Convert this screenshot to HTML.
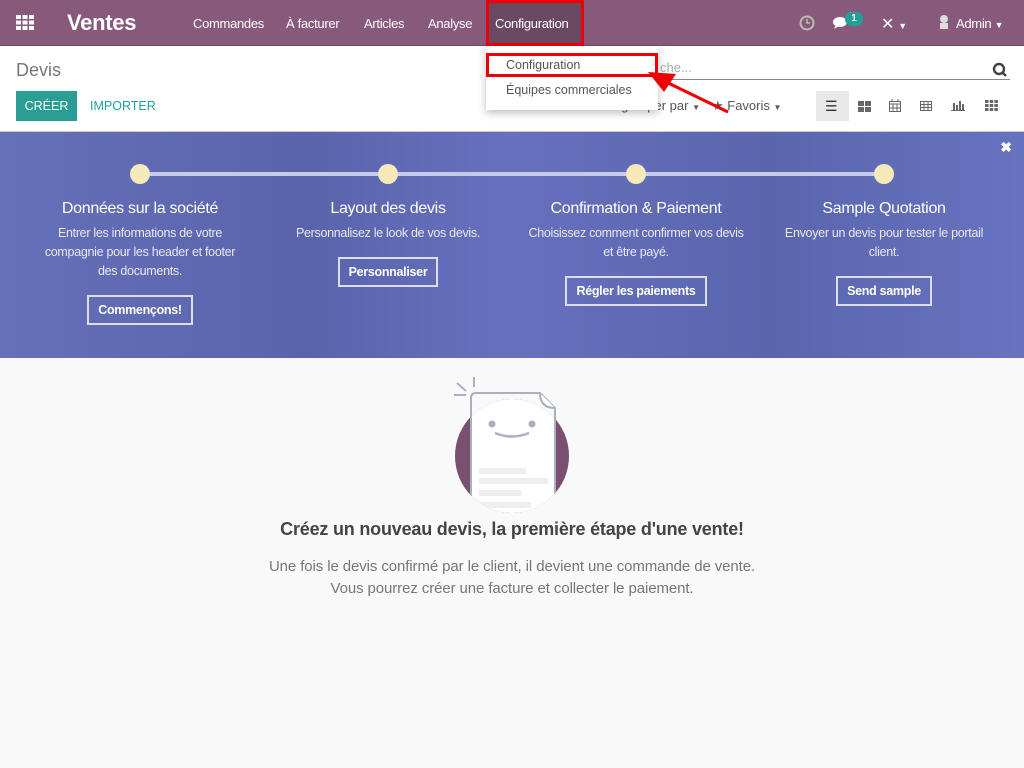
<!DOCTYPE html>
<html><head><meta charset="utf-8"><style>
*{box-sizing:border-box;margin:0;padding:0}
body{width:1024px;height:768px;overflow:hidden;font-family:"Liberation Sans",sans-serif;background:#f9f9f9;position:relative;color:#4c4c4c}
.nav{position:absolute;left:0;top:0;width:1024px;height:46px;background:#875a7b;border-bottom:1px solid #6c4a63}
.nav span{position:absolute;color:#fff;font-size:13px;top:16px;letter-spacing:-.3px}
.cp{position:absolute;left:0;top:46px;width:1024px;height:86px;background:#fff;border-bottom:1px solid #ccc}
.banner{position:absolute;left:0;top:132px;width:1024px;height:226px;background:linear-gradient(90deg,#6470b8 0%,#5a64ad 30%,#6670bd 50%,#5a65ae 75%,#6873c0 100%);color:#fff;text-align:center}
.col{position:absolute;top:68px;width:200px;margin-left:-100px}
.col h3{font-weight:normal;font-size:16px;margin-bottom:6px;letter-spacing:-.3px;white-space:nowrap}
.col p{font-size:12.5px;line-height:19px;color:#e8e8f4;letter-spacing:-.3px}
.col b{display:inline-block;border:2px solid #dde;padding:6px 9px;font-size:12.5px;margin-top:14px;letter-spacing:-.3px}
.dot{position:absolute;top:32px;width:20px;height:20px;border-radius:50%;background:#f6e9b8;margin-left:-10px}
.btn{position:absolute;font-size:13px}
</style></head><body>
<div class="nav">
 <svg style="position:absolute;left:16px;top:15px" width="18" height="15"><g fill="#fff"><rect x="0" y="0" width="5" height="4"/><rect x="6.5" y="0" width="5" height="4"/><rect x="13" y="0" width="5" height="4"/><rect x="0" y="5.5" width="5" height="4"/><rect x="6.5" y="5.5" width="5" height="4"/><rect x="13" y="5.5" width="5" height="4"/><rect x="0" y="11" width="5" height="4"/><rect x="6.5" y="11" width="5" height="4"/><rect x="13" y="11" width="5" height="4"/></g></svg>
 <span style="left:67px;top:10px;font-size:22px;font-weight:bold">Ventes</span>
 <span style="left:193px">Commandes</span><span style="left:286px">À facturer</span><span style="left:364px">Articles</span><span style="left:428px">Analyse</span>
 <div style="position:absolute;left:486px;top:0;width:98px;height:46px;background:#6a4a62;border:3px solid #e00"></div>
 <span style="left:495px">Configuration</span>
 <svg style="position:absolute;left:799px;top:15px" width="16" height="16"><circle cx="8" cy="8" r="6.5" fill="none" stroke="#bba" stroke-width="2"/><path d="M8 4v4h3" stroke="#bba" stroke-width="1.6" fill="none"/></svg>
 <svg style="position:absolute;left:832px;top:15px" width="18" height="16"><ellipse cx="8" cy="7" rx="7" ry="5" fill="#fff"/><path d="M4 10l-2 4 5-3z" fill="#fff"/></svg>
 <div style="position:absolute;left:845px;top:12px;width:18px;height:14px;border-radius:7px;background:#21a09a;color:#fff;font-size:10px;font-weight:bold;text-align:center;line-height:14px">1</div>
 <span style="left:881px;top:14px;font-size:16px">✕ <small style="font-size:9px">▼</small></span>
 <svg style="position:absolute;left:938px;top:14px" width="12" height="18"><circle cx="6" cy="5" r="4" fill="#ddd"/><path d="M2 9h8v6H2z" fill="#ddd"/></svg>
 <span style="left:956px">Admin <small style="font-size:9px">▼</small></span>
</div>
<div class="cp">
 <div style="position:absolute;left:16px;top:14px;font-size:18px;color:#777">Devis</div>
 <div style="position:absolute;left:16px;top:45px;width:61px;height:30px;background:#2a9d94;color:#fff;font-size:12.5px;line-height:30px;text-align:center">CRÉER</div>
 <div style="position:absolute;left:90px;top:53px;font-size:12.5px;color:#21a09a">IMPORTER</div>
 <div style="position:absolute;left:660px;top:14px;font-size:13px;color:#aaa">che...</div>
 <div style="position:absolute;left:660px;top:33px;width:350px;border-bottom:1px solid #888"></div>
 <svg style="position:absolute;left:992px;top:16px" width="16" height="16"><circle cx="7" cy="7" r="5" fill="none" stroke="#444" stroke-width="2.4"/><path d="M10 10l4 4" stroke="#444" stroke-width="2.6"/></svg>
 <div class="btn" style="left:516px;top:52px;color:#555">▾ Filtres</div>
 <div class="btn" style="left:588px;top:52px;color:#555">▬ Regrouper par <small style="font-size:8px">▼</small></div>
 <div class="btn" style="left:712px;top:52px;color:#555">★ Favoris <small style="font-size:8px">▼</small></div>
 <div style="position:absolute;left:816px;top:45px;width:33px;height:30px;background:#e8e8e8"></div>
 <div class="btn" style="left:825px;top:52px;font-size:14px;color:#333">☰</div>
 <svg style="position:absolute;left:858px;top:55px" width="13" height="11" fill="#666"><rect width="6" height="5"/><rect x="7" width="6" height="5"/><rect y="6" width="6" height="5"/><rect x="7" y="6" width="6" height="5"/></svg>
 <svg style="position:absolute;left:889px;top:53px" width="12" height="13" fill="none" stroke="#666"><rect x=".5" y="2.5" width="11" height="10"/><path d="M0 5h12M3 0v3M9 0v3M4 5v8M8 5v8M0 9h12"/></svg>
 <svg style="position:absolute;left:920px;top:55px" width="12" height="10" fill="none" stroke="#666"><rect x=".5" y=".5" width="11" height="9"/><path d="M0 3.5h12M0 6.5h12M4 0v10M8 0v10"/></svg>
 <svg style="position:absolute;left:951px;top:53px" width="14" height="12" fill="#666"><rect x="0" y="11" width="14" height="1"/><rect x="2" y="4" width="2" height="7"/><rect x="5" y="6" width="2" height="5"/><rect x="8" y="2" width="2" height="9"/><rect x="11" y="5" width="2" height="6"/></svg>
 <svg style="position:absolute;left:985px;top:54px" width="13" height="11" fill="#666"><rect width="3.5" height="3"/><rect x="4.7" width="3.5" height="3"/><rect x="9.4" width="3.5" height="3"/><rect y="4" width="3.5" height="3"/><rect x="4.7" y="4" width="3.5" height="3"/><rect x="9.4" y="4" width="3.5" height="3"/><rect y="8" width="3.5" height="3"/><rect x="4.7" y="8" width="3.5" height="3"/><rect x="9.4" y="8" width="3.5" height="3"/></svg>
</div>
<div style="position:absolute;left:486px;top:46px;width:172px;height:64px;background:#fff;box-shadow:0 3px 8px rgba(0,0,0,.25);font-size:12.5px;color:#555">
 <div style="position:absolute;left:0;top:7px;width:172px;height:24px;border:3px solid #e00"></div>
 <div style="position:absolute;left:20px;top:12px">Configuration</div>
 <div style="position:absolute;left:20px;top:37px">Équipes commerciales</div>
</div>
<svg style="position:absolute;left:640px;top:60px" width="100" height="60"><path d="M88 52L22 20" stroke="#e00" stroke-width="3"/><path d="M8 12l28 2-12 18z" fill="#e00"/></svg>
<div class="banner">
 <div style="position:absolute;left:140px;top:40px;width:744px;height:4px;background:#c7cbea"></div>
 <div class="dot" style="left:140px"></div><div class="dot" style="left:388px"></div><div class="dot" style="left:636px"></div><div class="dot" style="left:884px"></div>
 <div style="position:absolute;right:12px;top:7px;font-size:14px;font-weight:bold">✖</div>
 <div class="col" style="left:140px"><h3>Données sur la société</h3><p>Entrer les informations de votre compagnie pour les header et footer des documents.</p><b>Commençons!</b></div>
 <div class="col" style="left:388px;width:220px;margin-left:-110px"><h3>Layout des devis</h3><p>Personnalisez le look de vos devis.</p><b>Personnaliser</b></div>
 <div class="col" style="left:636px;width:220px;margin-left:-110px"><h3>Confirmation &amp; Paiement</h3><p>Choisissez comment confirmer vos devis et être payé.</p><b>Régler les paiements</b></div>
 <div class="col" style="left:884px"><h3>Sample Quotation</h3><p>Envoyer un devis pour tester le portail client.</p><b>Send sample</b></div>
</div>
<svg style="position:absolute;left:450px;top:374px" width="130" height="140">
 <defs><clipPath id="c"><circle cx="62" cy="82" r="57"/></clipPath></defs>
 <circle cx="62" cy="82" r="57" fill="#7a5070"/>
 <g clip-path="url(#c)"><path d="M21 24q0-5 5-5h64l15 15v120H21z" fill="#fff" stroke="#a9b0be" stroke-width="2"/><rect x="29" y="94" width="47" height="6" fill="#eee"/><rect x="29" y="104" width="69" height="6" fill="#eee"/><rect x="29" y="116" width="42" height="6" fill="#eee"/><rect x="29" y="128" width="52" height="6" fill="#eee"/></g>
 <path d="M21 82V24q0-5 5-5h64l15 15v48" fill="none" stroke="#a9b0be" stroke-width="2"/>
 <path d="M90 19q0 15 15 15" fill="#fff" stroke="#a9b0be" stroke-width="2"/>
 <circle cx="42" cy="50" r="3.5" fill="#a9b0be"/><circle cx="82" cy="50" r="3.5" fill="#a9b0be"/>
 <path d="M45 59q17 7 34 0" fill="none" stroke="#a9b0be" stroke-width="2.5"/>
 <path d="M7 9l9 8M24 3v10M4 21h12" stroke="#a9b0be" stroke-width="2"/>
</svg>
<div style="position:absolute;left:0;top:519px;width:1024px;text-align:center;font-size:18px;font-weight:bold;color:#444;letter-spacing:-.2px">Créez un nouveau devis, la première étape d'une vente!</div>
<div style="position:absolute;left:0;top:556px;width:1024px;text-align:center;font-size:15px;line-height:22px;color:#777;letter-spacing:-.1px">Une fois le devis confirmé par le client, il devient une commande de vente.<br>Vous pourrez créer une facture et collecter le paiement.</div>
</body></html>
